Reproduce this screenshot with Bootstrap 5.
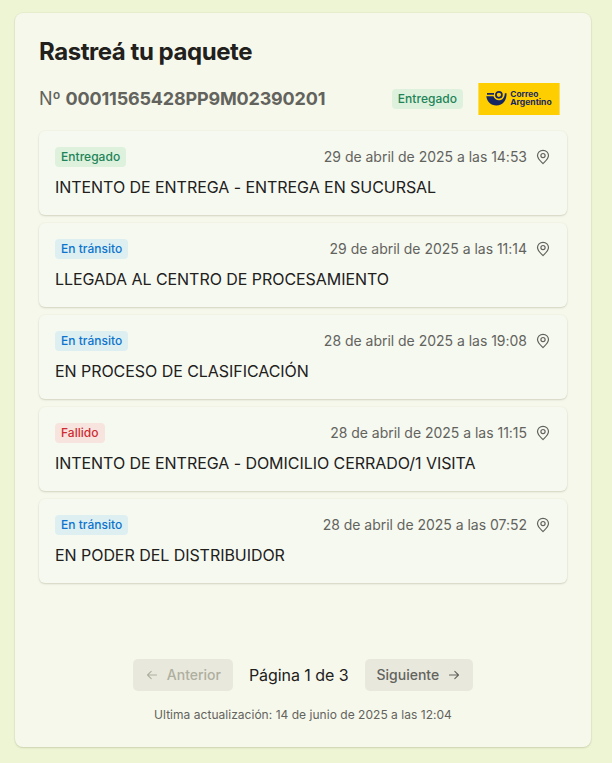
<!DOCTYPE html>
<html lang="es">
<head>
<meta charset="utf-8">
<meta name="viewport" content="width=device-width, initial-scale=1">
<title>Rastreá tu paquete</title>
<link href="https://cdn.jsdelivr.net/npm/bootstrap@5.3.0/dist/css/bootstrap.min.css" rel="stylesheet">
<style>
body{background:#eef5d4;font-family:Inter,sans-serif;font-size:16px;line-height:24px;color:#21201c;padding:13px 21px 16px 15px}
.panel{background:#f6f8eb;border-radius:8px;height:734px;box-shadow:0 0 0 1px rgba(60,60,20,.03),0 1px 2px rgba(60,60,20,.16)}
.panel h1{font-size:24px;line-height:30px;font-weight:700;letter-spacing:-.45px}
.muted{color:#63635e}
.code{font-size:18px;line-height:26px;letter-spacing:-.045px}
.code strong{font-weight:700;letter-spacing:-.18px}
.brand{width:96px;height:32px}
.brand svg{width:82px;height:32px}
.event{background:#f6f9f0;border-radius:6px;height:84px;box-shadow:0 0 0 1px rgba(60,60,20,.015),0 1px 2px rgba(60,60,20,.18)}
.date{font-size:14px;line-height:20px;letter-spacing:-.02px}
.state{font-size:12px;line-height:16px;font-weight:500;padding:2px 6px;border-radius:4px;letter-spacing:.03px}
.state.ok{background:#def1dd;color:#218358}
.state.way{background:#ddeff1;color:#0d74ce}
.state.fail{background:#f8e4df;color:#ce2c31}
.pg{--bs-btn-bg:#e8e8dd;--bs-btn-color:#63635e;--bs-btn-hover-bg:#dfdfd3;--bs-btn-disabled-bg:#e8e8dd;--bs-btn-disabled-color:#afaf9f;--bs-btn-disabled-opacity:1;--bs-btn-border-width:0;--bs-btn-border-radius:5px;height:32px;font-size:14px;line-height:20px;font-weight:500;padding:0 12px;letter-spacing:-.01px}
.pages{margin-top:76px;letter-spacing:-.06px}
.stamp{font-size:12px;line-height:16px;letter-spacing:.03px}
.event p{line-height:24px;letter-spacing:-.05px}
</style>
</head>
<body>
<svg class="d-none" xmlns="http://www.w3.org/2000/svg">
<symbol id="pin" viewBox="0 0 16 16"><path d="M8 1.3C4.8 1.3 2.5 3.7 2.5 6.6c0 3.2 2.7 5.3 5.5 8 2.8-2.7 5.5-4.8 5.5-8 0-2.9-2.3-5.3-5.5-5.3Z" fill="none" stroke="currentColor" stroke-width="1.2" stroke-linejoin="round"/><circle cx="8" cy="6.6" r="2.1" fill="none" stroke="currentColor" stroke-width="1.2"/></symbol>
</svg>
<main class="panel p-4">
<h1 class="mb-3">Rastreá tu paquete</h1>
<div class="d-flex align-items-center mb-3">
<div class="code muted me-auto">Nº <strong>00011565428PP9M02390201</strong></div>
<span class="state ok me-2">Entregado</span>
<div class="brand d-flex justify-content-center">
<svg viewBox="0 0 82 32" role="img" aria-label="Correo Argentino"><rect x=".4" width="81.2" height="32" fill="#ffce00"/>
<g fill="#152663"><path d="M9 10h7v1.7H9zM8.3 13.3h7.2c.5 2.2 2.8 4 5.4 4 3.6 0 5.9-3 5.9-7.1h1.8c0 7.2-3.6 12.2-10.2 12.2-5.9 0-9.3-3.7-10.1-9.1Z"/>
<circle cx="20.9" cy="11.8" r="3" fill="none" stroke="#152663" stroke-width="1.7"/>
<g font-family="Inter,sans-serif" font-size="7.6" font-weight="700"><text x="32.3" y="14.1" textLength="28" lengthAdjust="spacingAndGlyphs">Correo</text><text x="32.2" y="22.1" textLength="41.5" lengthAdjust="spacingAndGlyphs">Argentino</text></g></g></svg>
</div>
</div>
<section class="d-flex flex-column gap-2">
<article class="event p-3"><div class="d-flex align-items-center justify-content-between mb-2"><span class="state ok">Entregado</span><span class="date muted d-flex align-items-center gap-2">29 de abril de 2025 a las 14:53 <svg width="16" height="16"><use href="#pin"/></svg></span></div><p class="mb-0">INTENTO DE ENTREGA - ENTREGA EN SUCURSAL</p></article>
<article class="event p-3"><div class="d-flex align-items-center justify-content-between mb-2"><span class="state way">En tránsito</span><span class="date muted d-flex align-items-center gap-2">29 de abril de 2025 a las 11:14 <svg width="16" height="16"><use href="#pin"/></svg></span></div><p class="mb-0">LLEGADA AL CENTRO DE PROCESAMIENTO</p></article>
<article class="event p-3"><div class="d-flex align-items-center justify-content-between mb-2"><span class="state way">En tránsito</span><span class="date muted d-flex align-items-center gap-2">28 de abril de 2025 a las 19:08 <svg width="16" height="16"><use href="#pin"/></svg></span></div><p class="mb-0">EN PROCESO DE CLASIFICACIÓN</p></article>
<article class="event p-3"><div class="d-flex align-items-center justify-content-between mb-2"><span class="state fail">Fallido</span><span class="date muted d-flex align-items-center gap-2">28 de abril de 2025 a las 11:15 <svg width="16" height="16"><use href="#pin"/></svg></span></div><p class="mb-0">INTENTO DE ENTREGA - DOMICILIO CERRADO/1 VISITA</p></article>
<article class="event p-3"><div class="d-flex align-items-center justify-content-between mb-2"><span class="state way">En tránsito</span><span class="date muted d-flex align-items-center gap-2">28 de abril de 2025 a las 07:52 <svg width="16" height="16"><use href="#pin"/></svg></span></div><p class="mb-0">EN PODER DEL DISTRIBUIDOR</p></article>
</section>
<nav class="pages d-flex justify-content-center align-items-center gap-3" aria-label="Páginas">
<button class="btn pg d-flex align-items-center gap-2" disabled><svg width="14" height="14" viewBox="0 0 14 14" fill="none" stroke="currentColor" stroke-width="1.1" stroke-linecap="round" stroke-linejoin="round"><path d="M11.5 7H2.7M6.2 3.3 2.5 7l3.7 3.7"/></svg>Anterior</button>
<span>Página 1 de 3</span>
<button class="btn pg d-flex align-items-center gap-2">Siguiente<svg width="14" height="14" viewBox="0 0 14 14" fill="none" stroke="currentColor" stroke-width="1.1" stroke-linecap="round" stroke-linejoin="round"><path d="M2.5 7h8.8M7.8 3.3 11.5 7l-3.7 3.7"/></svg></button>
</nav>
<div class="stamp muted text-center mt-3">Ultima actualización: 14 de junio de 2025 a las 12:04</div>
</main>
<script src="https://cdn.jsdelivr.net/npm/bootstrap@5.3.0/dist/js/bootstrap.bundle.min.js"></script>
</body>
</html>
